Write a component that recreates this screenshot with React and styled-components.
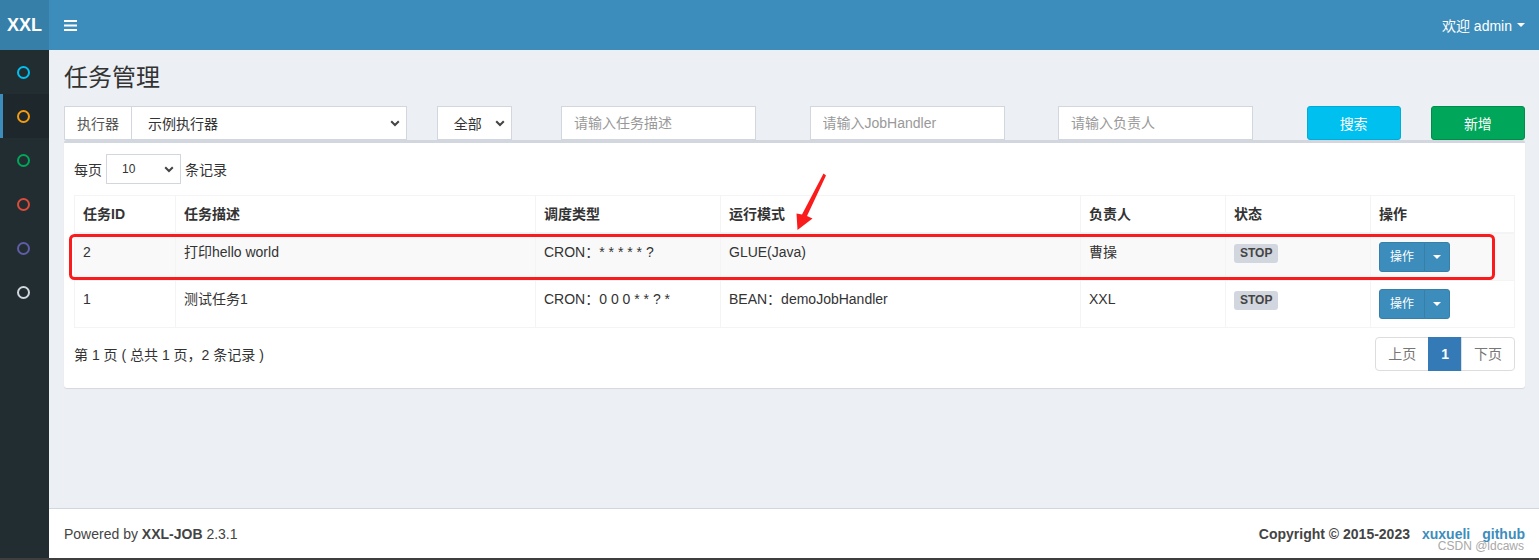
import React from 'react';
import styled, { createGlobalStyle } from 'styled-components';

const GlobalStyle = createGlobalStyle`
  html, body {
    margin: 0;
    padding: 0;
  }
  body {
    font-family: "Liberation Sans", Arial, "Noto Sans CJK SC", sans-serif;
    font-size: 14px;
    color: #333;
    background: #ecf0f5;
  }
  * {
    box-sizing: border-box;
  }
`;

const menuColors = ['#00c0ef', '#f39c12', '#00a65a', '#dd4b39', '#605ca8', '#d2d6de'];

const jobs = [
  { id: 2, desc: '打印hello world', cron: 'CRON：* * * * * ?', mode: 'GLUE(Java)', owner: '曹操' },
  { id: 1, desc: '测试任务1', cron: 'CRON：0 0 0 * * ? *', mode: 'BEAN：demoJobHandler', owner: 'XXL' },
];

const columns = [
  { title: '任务ID', width: 101 },
  { title: '任务描述', width: 360 },
  { title: '调度类型', width: 185 },
  { title: '运行模式', width: 360 },
  { title: '负责人', width: 145 },
  { title: '状态', width: 145 },
  { title: '操作', width: 144 },
];

const Chevron = () => (
  <svg width="10" height="7" viewBox="0 0 10 7">
    <polyline points="1.2,1.2 5,5 8.8,1.2" fill="none" stroke="#444" strokeWidth="2" />
  </svg>
);

const App = () => {
  return (
    <>
      <GlobalStyle />
      <Page>
        <Logo>XXL</Logo>
        <Navbar>
          <svg width="13" height="11" viewBox="0 0 13 11">
            <rect x="0" y="0" width="13" height="2" fill="#fff" />
            <rect x="0" y="4.5" width="13" height="2" fill="#fff" />
            <rect x="0" y="9" width="13" height="2" fill="#fff" />
          </svg>
          <UserMenu>
            欢迎 admin <Caret />
          </UserMenu>
        </Navbar>

        <Sidebar>
          {menuColors.map((c, i) => (
            <MenuItem key={c} $active={i === 1}>
              <Ring $color={c} />
            </MenuItem>
          ))}
        </Sidebar>

        <Content>
          <Title>任务管理</Title>
          <Section>
            <FilterRow>
              <Col>
                <InputGroup>
                  <Addon>执行器</Addon>
                  <SelectBox $grow>
                    示例执行器 <Chevron />
                  </SelectBox>
                </InputGroup>
              </Col>
              <Col>
                <SelectBox $width={75}>
                  全部 <Chevron />
                </SelectBox>
              </Col>
              <Col>
                <Input placeholder="请输入任务描述" />
              </Col>
              <Col>
                <Input placeholder="请输入JobHandler" />
              </Col>
              <Col>
                <Input placeholder="请输入负责人" />
              </Col>
              <Col>
                <Button $bg="#00c0ef" $border="#00acd6">搜索</Button>
              </Col>
              <Col>
                <Button $bg="#00a65a" $border="#008d4c">新增</Button>
              </Col>
            </FilterRow>

            <Box>
              <LengthRow>
                每页
                <SelectBox $width={75} $height={30} $small>
                  10 <Chevron />
                </SelectBox>
                条记录
              </LengthRow>

              <Table>
                <colgroup>
                  {columns.map((c) => (
                    <col key={c.title} style={{ width: c.width }} />
                  ))}
                </colgroup>
                <thead>
                  <tr>
                    {columns.map((c) => (
                      <Th key={c.title}>{c.title}</Th>
                    ))}
                  </tr>
                </thead>
                <tbody>
                  {jobs.map((job, i) => (
                    <Tr key={job.id} $striped={i === 0}>
                      <Td>{job.id}</Td>
                      <Td>{job.desc}</Td>
                      <Td>{job.cron}</Td>
                      <Td>{job.mode}</Td>
                      <Td>{job.owner}</Td>
                      <Td>
                        <Label>STOP</Label>
                      </Td>
                      <Td>
                        <BtnGroup>
                          <BtnMain>操作</BtnMain>
                          <BtnCaret>
                            <Caret />
                          </BtnCaret>
                        </BtnGroup>
                      </Td>
                    </Tr>
                  ))}
                </tbody>
              </Table>

              <TableFooter>
                <span>第 1 页 ( 总共 1 页，2 条记录 )</span>
                <Pager>
                  <PageItem>上页</PageItem>
                  <PageItem $active>1</PageItem>
                  <PageItem>下页</PageItem>
                </Pager>
              </TableFooter>
            </Box>
          </Section>
        </Content>

        <Footer>
          <span>
            Powered by <b>XXL-JOB</b> 2.3.1
          </span>
          <Copyright>
            Copyright © 2015-2023
            <FooterLink>xuxueli</FooterLink>
            <FooterLink>github</FooterLink>
          </Copyright>
          <Watermark>CSDN @ldcaws</Watermark>
        </Footer>

        <Annotation width="1539" height="558" viewBox="0 0 1539 558">
          <rect x="70.5" y="235.5" width="1423" height="43" rx="4" fill="none" stroke="#fa1c1c" strokeWidth="3" />
          <polygon
            points="823.5,173.5 826,175.5 807,216 812.5,218.5 797.5,230 796.5,213.5 802,214.5"
            fill="#fa1c1c"
          />
        </Annotation>
      </Page>
      <BottomEdge />
    </>
  );
};

const Page = styled.div`
  position: relative;
  display: grid;
  grid-template-columns: 49px 1fr;
  grid-template-rows: 50px 1fr 50px;
  height: 558px;
`;

const Logo = styled.div`
  background: #367fa9;
  color: #fff;
  font-weight: bold;
  font-size: 18px;
  display: flex;
  align-items: center;
  justify-content: center;
`;

const Navbar = styled.header`
  background: #3c8dbc;
  display: flex;
  align-items: center;
  justify-content: space-between;
  padding: 0 15px;
  color: #fff;
`;

const UserMenu = styled.div`
  display: flex;
  align-items: center;
  gap: 5px;
  font-size: 14px;
`;

const Caret = styled.span`
  display: inline-block;
  width: 0;
  height: 0;
  border-top: 4px solid #fff;
  border-left: 4px solid transparent;
  border-right: 4px solid transparent;
`;

const Sidebar = styled.aside`
  grid-row: 2 / 4;
  background: #222d32;
`;

const MenuItem = styled.div`
  height: 44px;
  display: flex;
  align-items: center;
  padding-left: ${(p) => (p.$active ? 14 : 17)}px;
  border-left: ${(p) => (p.$active ? '3px solid #3c8dbc' : 'none')};
  background: ${(p) => (p.$active ? '#1e282c' : 'transparent')};
`;

const Ring = styled.span`
  width: 13px;
  height: 13px;
  border-radius: 50%;
  border: 2.5px solid ${(p) => p.$color};
`;

const Content = styled.main`
  padding: 15px 15px 0;
`;

const Title = styled.h1`
  margin: 0;
  font-size: 24px;
  font-weight: normal;
  line-height: 1.1;
  color: #333;
`;

const Section = styled.section`
  padding-top: 15px;
`;

const FilterRow = styled.div`
  display: grid;
  grid-template-columns: 3fr 1fr 2fr 2fr 2fr 1fr 1fr;
  margin: 0 -15px;
`;

const Col = styled.div`
  padding: 0 15px;
`;

const InputGroup = styled.div`
  display: flex;
  height: 34px;
`;

const Addon = styled.span`
  display: flex;
  align-items: center;
  padding: 0 12px;
  border: 1px solid #d2d6de;
  border-right: none;
  background: #fff;
  color: #555;
`;

const SelectBox = styled.div`
  display: flex;
  align-items: center;
  justify-content: space-between;
  flex: ${(p) => (p.$grow ? 1 : 'none')};
  width: ${(p) => (p.$width ? `${p.$width}px` : 'auto')};
  height: ${(p) => p.$height || 34}px;
  padding: 0 6px 0 ${(p) => (p.$small ? 15 : 16)}px;
  border: 1px solid #d2d6de;
  background: #fff;
  color: #333;
  font-size: ${(p) => (p.$small ? 12 : 14)}px;
`;

const Input = styled.input`
  width: 195px;
  height: 34px;
  padding: 6px 12px;
  border: 1px solid #d2d6de;
  border-radius: 0;
  font: inherit;
  font-size: 14px;
  color: #555;
  background: #fff;
  outline: none;

  &::placeholder {
    color: #999;
  }
`;

const Button = styled.button`
  width: 100%;
  height: 34px;
  border: 1px solid ${(p) => p.$border};
  border-radius: 3px;
  background: ${(p) => p.$bg};
  color: #fff;
  font: inherit;
  font-size: 14px;
`;

const Box = styled.div`
  background: #fff;
  border-top: 3px solid #d2d6de;
  border-radius: 3px;
  box-shadow: 0 1px 1px rgba(0, 0, 0, 0.1);
  padding: 11px 10px 17px;
`;

const LengthRow = styled.div`
  display: flex;
  align-items: center;
  gap: 4px;
  height: 30px;
  margin-bottom: 11px;
`;

const Table = styled.table`
  width: 100%;
  table-layout: fixed;
  border-collapse: collapse;
  border: 1px solid #f4f4f4;
`;

const Th = styled.th`
  text-align: left;
  font-weight: bold;
  padding: 8px;
  line-height: 20px;
  border: 1px solid #f4f4f4;
  border-bottom-width: 2px;
`;

const Tr = styled.tr`
  background: ${(p) => (p.$striped ? '#f9f9f9' : '#fff')};
`;

const Td = styled.td`
  padding: 8px;
  line-height: 20px;
  vertical-align: top;
  border: 1px solid #f4f4f4;
`;

const Label = styled.span`
  display: inline-block;
  vertical-align: top;
  margin-top: 2px;
  padding: 3px 6px 4px;
  border-radius: 3px;
  background: #d2d6de;
  color: #444;
  font-size: 12px;
  font-weight: bold;
  line-height: 1;
`;

const BtnGroup = styled.div`
  display: inline-flex;
  vertical-align: top;
  height: 30px;
`;

const BtnMain = styled.span`
  display: flex;
  align-items: center;
  padding: 0 10px;
  font-size: 12px;
  color: #fff;
  background: #3c8dbc;
  border: 1px solid #367fa9;
  border-radius: 3px 0 0 3px;
`;

const BtnCaret = styled.span`
  display: flex;
  align-items: center;
  justify-content: center;
  width: 26px;
  margin-left: -1px;
  background: #3c8dbc;
  border: 1px solid #367fa9;
  border-radius: 0 3px 3px 0;
`;

const TableFooter = styled.div`
  display: flex;
  align-items: center;
  justify-content: space-between;
  margin-top: 9px;
`;

const Pager = styled.ul`
  display: flex;
  margin: 0;
  padding: 0;
  list-style: none;
`;

const PageItem = styled.li`
  padding: 6px 12px;
  line-height: 20px;
  margin-left: -1px;
  border: 1px solid ${(p) => (p.$active ? '#337ab7' : '#ddd')};
  background: ${(p) => (p.$active ? '#337ab7' : '#fff')};
  color: ${(p) => (p.$active ? '#fff' : '#777')};
  font-weight: ${(p) => (p.$active ? 'bold' : 'normal')};

  &:first-child {
    margin-left: 0;
    border-radius: 4px 0 0 4px;
  }
  &:last-child {
    border-radius: 0 4px 4px 0;
  }
`;

const Footer = styled.footer`
  position: relative;
  display: flex;
  align-items: center;
  justify-content: space-between;
  padding: 0 15px;
  background: #fff;
  border-top: 1px solid #d2d6de;
  color: #444;
`;

const Copyright = styled.span`
  display: flex;
  gap: 12px;
  font-weight: bold;
`;

const FooterLink = styled.span`
  color: #3c8dbc;
`;

const Watermark = styled.span`
  position: absolute;
  right: 16px;
  bottom: 5px;
  font-size: 12px;
  color: #a8a8a8;
`;

const Annotation = styled.svg`
  position: absolute;
  left: 0;
  top: 0;
  pointer-events: none;
`;

const BottomEdge = styled.div`
  height: 2px;
  background: #3f3f3f;
`;

export default App;
